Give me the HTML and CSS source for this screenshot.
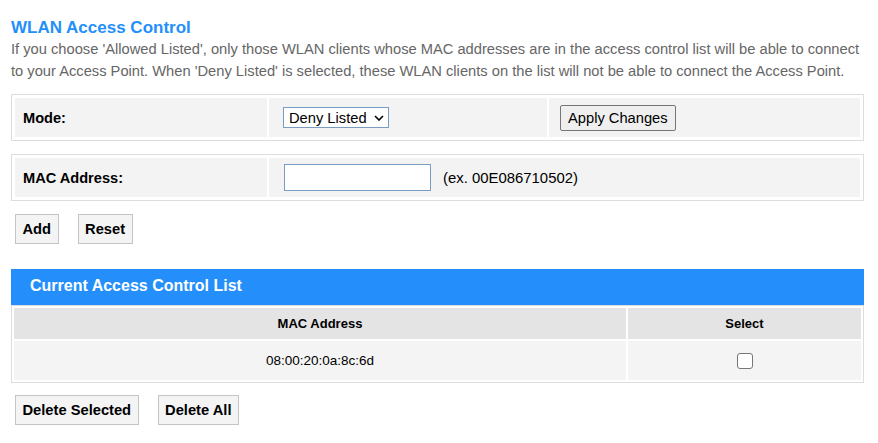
FILE: index.html
```html
<!DOCTYPE html>
<html>
<head>
<meta charset="utf-8">
<link rel="stylesheet" href="styles.css">
</head>
<body>
<div class="page">
  <h2 class="title">WLAN Access Control</h2>
  <p class="desc">If you choose 'Allowed Listed', only those WLAN clients whose MAC addresses are in the access control list will be able to connect to your Access Point. When 'Deny Listed' is selected, these WLAN clients on the list will not be able to connect the Access Point.</p>

  <table class="form-table">
    <tr>
      <td class="label c1">Mode:</td>
      <td class="c2">
        <span class="select-wrap">
          <select class="select">
            <option>Deny Listed</option>
            <option>Allowed Listed</option>
            <option>Disabled</option>
          </select>
          <svg class="chev" width="10" height="6" viewBox="0 0 10 6"><path d="M1 1 L5 5 L9 1" fill="none" stroke="#000" stroke-width="1.6"/></svg>
        </span>
      </td>
      <td class="c3"><button class="apply">Apply Changes</button></td>
    </tr>
  </table>

  <table class="form-table mac-table">
    <tr>
      <td class="label c1">MAC Address:</td>
      <td class="c2 mac-cell"><input class="mac-input" type="text"><span class="hint">(ex. 00E086710502)</span></td>
    </tr>
  </table>

  <div class="btn-row first">
    <button class="btn">Add</button>
    <button class="btn">Reset</button>
  </div>

  <div class="list-head">Current Access Control List</div>
  <table class="list-table">
    <tr class="head-row">
      <th class="col-mac">MAC Address</th>
      <th class="col-sel">Select</th>
    </tr>
    <tr class="data-row">
      <td>08:00:20:0a:8c:6d</td>
      <td><input class="check" type="checkbox"></td>
    </tr>
  </table>

  <div class="btn-row last">
    <button class="btn">Delete Selected</button>
    <button class="btn">Delete All</button>
  </div>
</div>
</body>
</html>
```

FILE: styles.css
```css
html, body {
  margin: 0;
  padding: 0;
  background: #fff;
}
body {
  font-family: "Liberation Sans", Arial, sans-serif;
  font-size: 14.7px;
  color: #000;
}
.page {
  padding: 18px 14px 0 11px;
  width: 853px;
}
.title {
  margin: 0;
  font-size: 17px;
  line-height: 20px;
  font-weight: bold;
  color: #248ffa;
}
.desc {
  margin: 0 0 12px 0;
  color: #666;
  font-size: 14.7px;
  line-height: 22px;
}
.form-table {
  width: 853px;
  border: 1px solid #ddd;
  padding: 1px;
  border-spacing: 2px;
  border-collapse: separate;
  table-layout: fixed;
}
.form-table td {
  background: #f3f3f3;
  height: 39px;
  padding: 0;
  vertical-align: middle;
}
.form-table td.c1 { width: 244px; padding-left: 8px; }
.form-table td.c2 { width: 264px; padding-left: 14px; }
.form-table td.c3 { padding-left: 11px; }
.label {
  font-weight: bold;
  font-size: 14.6px;
}
.mac-table { margin-top: 13px; }
.mac-table td.c2 { width: auto; padding-left: 15px; }
.select-wrap {
  position: relative;
  display: inline-block;
  vertical-align: middle;
}
.select {
  -webkit-appearance: none;
  appearance: none;
  font-family: "Liberation Sans", Arial, sans-serif;
  font-size: 14.7px;
  height: 21px;
  width: 106px;
  border: 1px solid #7a9cc0;
  border-radius: 0;
  background: #fff;
  padding: 0 0 0 5px;
  margin: 0;
  color: #000;
  display: block;
}
.chev {
  position: absolute;
  right: 5px;
  top: 8px;
  pointer-events: none;
}
.apply {
  font-family: "Liberation Sans", Arial, sans-serif;
  font-size: 14.7px;
  height: 26px;
  padding: 0 7px;
  border: 1px solid #767676;
  border-radius: 2px;
  background: #efefef;
  color: #000;
  margin: 0;
}
.mac-cell {
  white-space: nowrap;
}
.mac-input {
  width: 147px;
  height: 27px;
  box-sizing: border-box;
  border: 1px solid #7a9cc0;
  border-radius: 0;
  margin: 0 12px 0 0;
  padding: 0 4px;
  vertical-align: middle;
  font-family: "Liberation Sans", Arial, sans-serif;
  font-size: 14px;
}
.hint {
  vertical-align: middle;
  font-size: 14.9px;
}
.btn-row {
  display: flex;
  gap: 19px;
  padding-left: 4px;
}
.btn-row.first { margin-top: 13px; }
.btn-row.last { margin-top: 12px; }
.btn {
  font-family: "Liberation Sans", Arial, sans-serif;
  font-size: 14.7px;
  font-weight: bold;
  height: 30px;
  padding: 0 6.5px;
  border: 1px solid #c4c4c4;
  background: #f4f4f4;
  color: #000;
  margin: 0;
}
.list-head {
  margin-top: 25px;
  height: 36px;
  line-height: 34px;
  background: #248ffa;
  color: #fff;
  font-weight: bold;
  font-size: 16px;
  padding-left: 19px;
}
.list-table {
  width: 853px;
  border: 1px solid #ddd;
  border-spacing: 2px;
  border-collapse: separate;
  table-layout: fixed;
}
.list-table th, .list-table td {
  text-align: center;
  padding: 0;
  vertical-align: middle;
}
.list-table th {
  background: #e4e4e4;
  height: 31px;
  font-weight: bold;
  font-size: 13px;
}
.list-table td {
  background: #f4f4f4;
  height: 39px;
  font-size: 13.5px;
}
.col-mac { width: 612px; }
.check {
  -webkit-appearance: none;
  appearance: none;
  width: 16px;
  height: 16px;
  border: 1px solid #767676;
  border-radius: 3px;
  background: #fff;
  margin: 0;
  vertical-align: middle;
}
```
